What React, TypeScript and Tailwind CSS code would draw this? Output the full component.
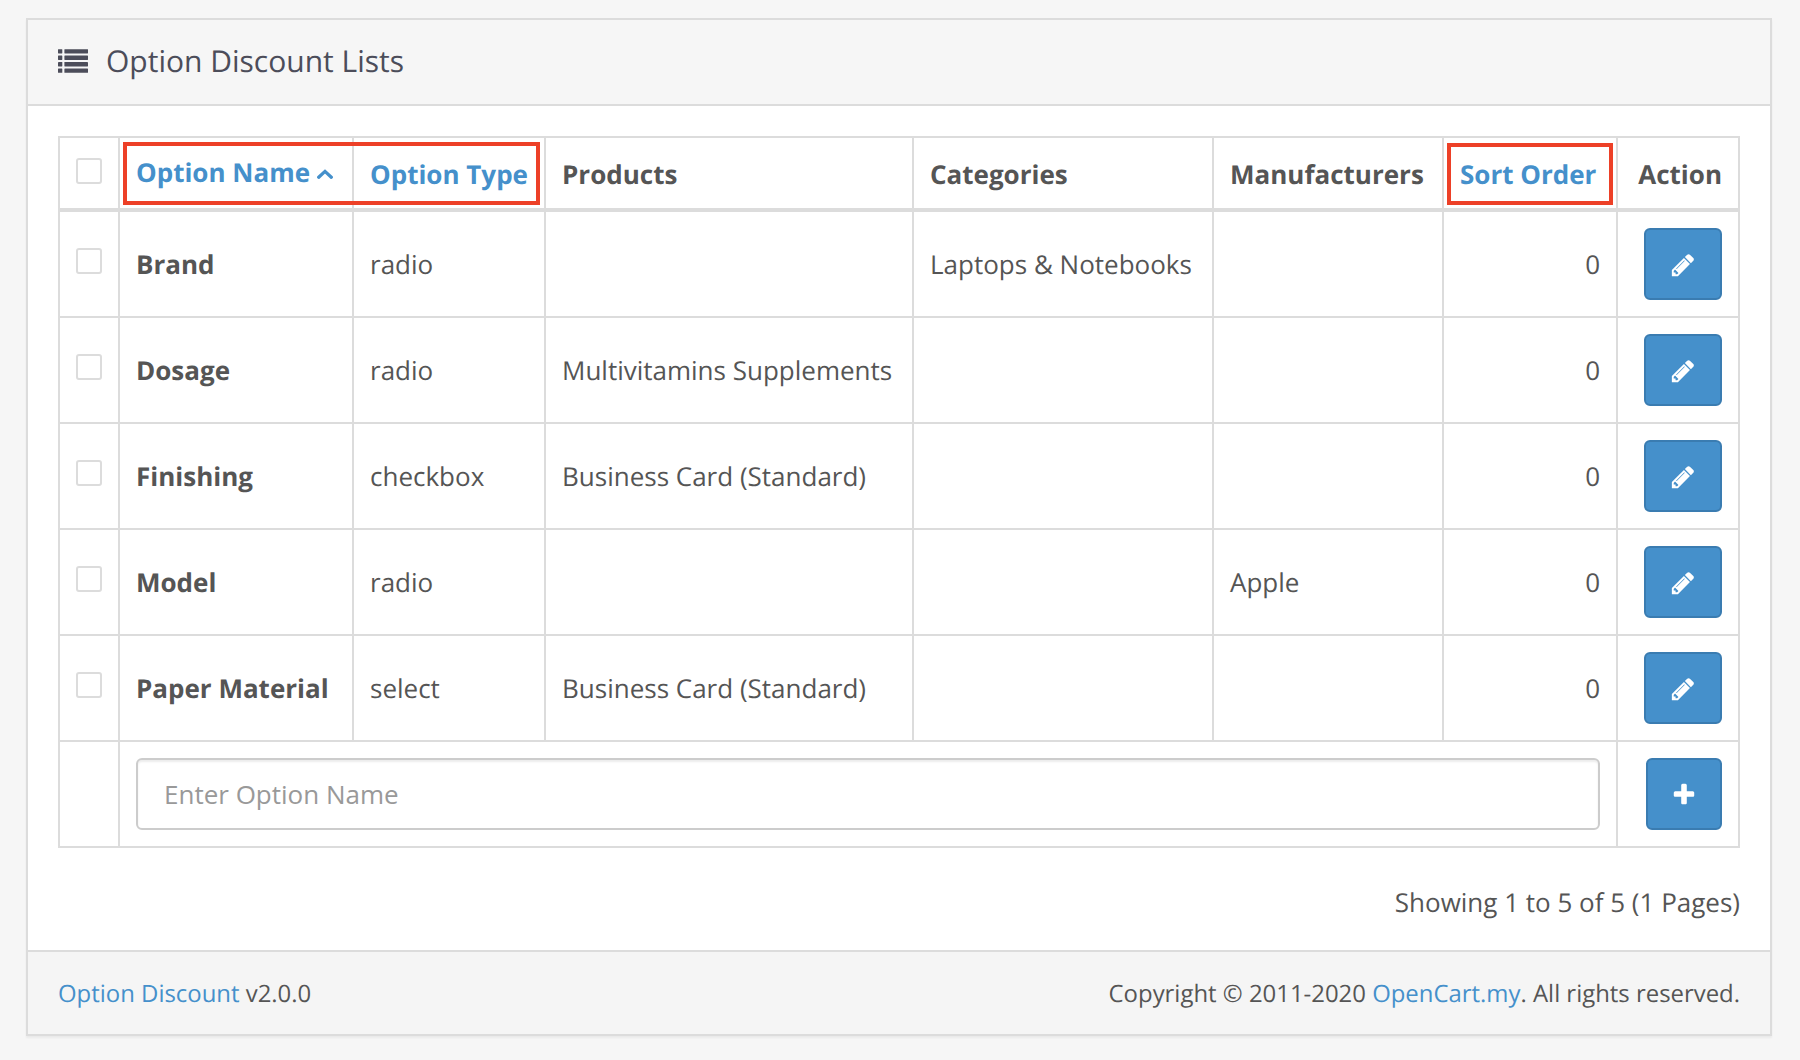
import React from "react";

const columns =
  "grid grid-cols-[60px_234px_192px_368px_300px_230px_174px_122px] border-l-2 border-[#dcdcdc]";
const cell = "border-r-2 border-[#dcdcdc] flex items-center px-4 whitespace-nowrap";

type Row = {
  name: string;
  type: string;
  products: string;
  categories: string;
  manufacturers: string;
  sort: number;
};

const rows: Row[] = [
  { name: "Brand", type: "radio", products: "", categories: "Laptops & Notebooks", manufacturers: "", sort: 0 },
  { name: "Dosage", type: "radio", products: "Multivitamins Supplements", categories: "", manufacturers: "", sort: 0 },
  { name: "Finishing", type: "checkbox", products: "Business Card (Standard)", categories: "", manufacturers: "", sort: 0 },
  { name: "Model", type: "radio", products: "", categories: "", manufacturers: "Apple", sort: 0 },
  { name: "Paper Material", type: "select", products: "Business Card (Standard)", categories: "", manufacturers: "", sort: 0 },
];

function ListIcon() {
  return (
    <svg width="30" height="24" viewBox="0 0 30 24" fill="currentColor" aria-hidden="true">
      {[0.2, 6.6, 13.1, 19.5].map((y) => (
        <g key={y}>
          <rect x="0" y={y} width="4.3" height="4.3" rx="0.4" />
          <rect x="6.4" y={y} width="23.6" height="4.3" rx="0.4" />
        </g>
      ))}
    </svg>
  );
}

function PencilIcon() {
  return (
    <svg className="mt-[2px]" width="26" height="26" viewBox="0 0 1792 1792" fill="currentColor" aria-hidden="true">
      <path d="M491 1536l91-91-235-235-91 91v107h128v128h107zm523-928q0-22-22-22-10 0-17 7l-542 542q-7 7-7 17 0 22 22 22 10 0 17-7l542-542q7-7 7-17zm-54-192l416 416-832 832h-416v-416zm683 96q0 53-37 90l-166 166-416-416 166-165q36-38 90-38 53 0 91 38l235 234q37 39 37 91z" />
    </svg>
  );
}

function PlusIcon() {
  return (
    <svg className="mt-[2px]" width="26" height="26" viewBox="0 0 1792 1792" fill="currentColor" aria-hidden="true">
      <path d="M1600 736v192q0 40-28 68t-68 28h-416v416q0 40-28 68t-68 28h-192q-40 0-68-28t-28-68v-416h-416q-40 0-68-28t-28-68v-192q0-40 28-68t68-28h416v-416q0-40 28-68t68-28h192q40 0 68 28t28 68v416h416q40 0 68 28t28 68z" />
    </svg>
  );
}

function AngleUpIcon() {
  return (
    <svg className="ml-[7px] mt-[3px]" width="16" height="10" viewBox="0 0 16 10" fill="none" stroke="currentColor" strokeWidth="3.3" strokeLinecap="round" strokeLinejoin="miter" aria-hidden="true">
      <path d="M1.7 8.2L8 2.4L14.3 8.2" />
    </svg>
  );
}

function Checkbox() {
  return (
    <input type="checkbox" className="block size-[26px] appearance-none rounded-[3px] border-2 border-[#dcdcdc] bg-white" />
  );
}

const button =
  "flex h-[72px] items-center justify-center rounded-[6px] border-2 border-[#3a7cb1] bg-[#4590cb] text-white";

export default function App() {
  return (
    <div className="h-[1060px] w-[1800px] overflow-hidden bg-[#f6f6f6] pl-[26px] pt-[18px] font-['Open_Sans',sans-serif] text-[26px] leading-[36px] text-[#555555] [text-rendering:geometricPrecision]">
      <div className="flex h-[1018px] w-[1746px] flex-col border-2 border-[#dcdcdc] bg-white shadow-[0_2px_2px_rgba(0,0,0,0.05)]">
        <header className="flex h-[86px] items-center border-b-2 border-[#dcdcdc] bg-[#f6f6f6] pb-[2px] pl-[30px] text-[#4c4d5a]">
          <div className="pb-px"><ListIcon /></div>
          <h1 className="ml-[18px] text-[30px]">Option Discount Lists</h1>
        </header>

        <main className="flex-1 px-[30px] pt-[30px]">
          <div className="relative">
            <div className={`${columns} h-[76px] border-t-2 border-b-4 font-bold`}>
              <div className={`${cell} items-start pt-[20px]`}><Checkbox /></div>
              <div className={`${cell} pb-[2px] text-[#4590cb]`}>Option Name<AngleUpIcon /></div>
              <div className={`${cell} pt-[2px] text-[#4590cb]`}>Option Type</div>
              <div className={`${cell} pt-[2px]`}>Products</div>
              <div className={`${cell} pt-[2px]`}>Categories</div>
              <div className={`${cell} pt-[2px]`}>Manufacturers</div>
              <div className={`${cell} pt-[2px] text-[#4590cb]`}>Sort Order</div>
              <div className={`${cell} justify-end pt-[2px]`}>Action</div>
            </div>
            <div className="pointer-events-none absolute left-[65px] top-[6px] h-[63px] w-[417px] border-4 border-[#ed4027]" />
            <div className="pointer-events-none absolute left-[1389px] top-[7px] h-[62px] w-[166px] border-4 border-[#ed4027]" />
          </div>

          {rows.map((row) => (
            <div key={row.name} className={`${columns} h-[106px] border-b-2`}>
              <div className={`${cell} items-start pt-[36px]`}><Checkbox /></div>
              <div className={`${cell} font-bold`}>{row.name}</div>
              <div className={cell}>{row.type}</div>
              <div className={cell}>{row.products}</div>
              <div className={cell}>{row.categories}</div>
              <div className={cell}>{row.manufacturers}</div>
              <div className={`${cell} justify-end`}>{row.sort}</div>
              <div className={`${cell} justify-end`}>
                <button className={`${button} w-[78px]`} aria-label="Edit"><PencilIcon /></button>
              </div>
            </div>
          ))}

          <div className={`${columns} h-[106px] border-b-2`}>
            <div className={cell} />
            <div className={`${cell} col-span-6`}>
              <input
                placeholder="Enter Option Name"
                className="h-[72px] w-full rounded-[6px] border-2 border-[#cccccc] px-[26px] shadow-[inset_0_2px_2px_rgba(0,0,0,0.075)] placeholder:text-[#999999]"
              />
            </div>
            <div className={`${cell} justify-end`}>
              <button className={`${button} w-[76px]`} aria-label="Add"><PlusIcon /></button>
            </div>
          </div>

          <p className="mt-[36px] text-right">Showing 1 to 5 of 5 (1 Pages)</p>
        </main>

        <footer className="flex h-[84px] items-center justify-between border-t-2 border-[#dcdcdc] bg-[#f5f5f5] px-[30px] pt-[2px] text-[23.92px]">
          <span><a className="text-[#4590cb]">Option Discount</a> v2.0.0</span>
          <span>Copyright © 2011-2020 <a className="text-[#4590cb]">OpenCart.my</a>. All rights reserved.</span>
        </footer>
      </div>
    </div>
  );
}
